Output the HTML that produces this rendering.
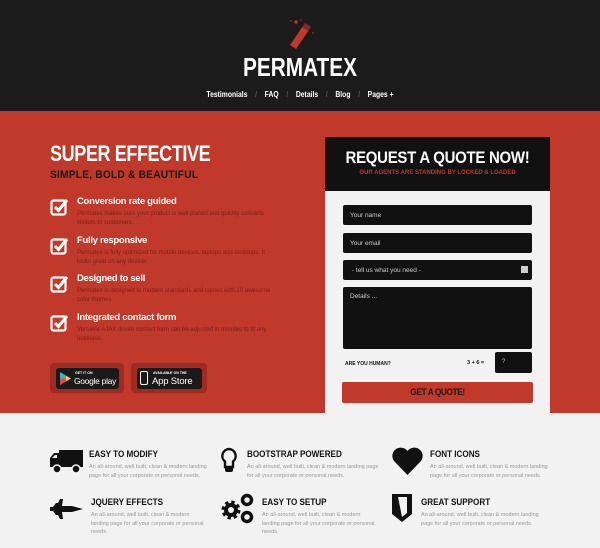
<!DOCTYPE html>
<html><head><meta charset="utf-8"><style>
*{margin:0;padding:0;box-sizing:border-box}
body{width:600px;height:548px;overflow:hidden;background:#f2f2f2;font-family:"Liberation Sans",sans-serif;position:relative}
.a{position:absolute}
.hd{left:0;top:0;width:600px;height:111px;background:#1b1b1b}
.red{left:0;top:111px;width:600px;height:302px;background:#c0392b}
.disp{font-weight:900;letter-spacing:-0.5px;white-space:nowrap}
.sl{transform:scaleX(0.86);transform-origin:left top}
.sc{transform:scaleX(0.82);transform-origin:center top}
.nav{top:90px;left:0;width:600px;text-align:center;color:#fff;font-size:8px;font-weight:bold;transform:scaleX(0.85);transform-origin:center top}
.nav span{margin:0 9px}.nav i{color:#555;font-style:normal}
.t{color:#fff;font-size:9.5px;font-weight:bold;left:77px;letter-spacing:-0.3px}
.d{color:#7d221a;font-size:6px;left:77px;width:200px;line-height:9px}
.cb{left:50px;width:19px;height:19px}
.inp{left:343px;width:189px;background:#111;border-radius:2px;color:#ccc;font-size:6.5px;padding:7px 0 0 7px}
.ft{font-size:9px;font-weight:900;color:#111;white-space:nowrap;transform:scaleX(0.9);transform-origin:left top}
.fd{font-size:5.5px;color:#999;line-height:8.5px;width:130px}
</style></head><body>
<div class="a hd"></div>
<svg class="a" style="left:283px;top:17px" width="34" height="34" viewBox="0 0 34 34">
<path d="M22 6 L28 10 L13 32 L7 28 Z" fill="#c0392b"/><path d="M22 6 L28 10 L25 14 L19 10Z" fill="#1b1b1b" opacity=".4"/>
<path d="M11 5h4M13 3v4" stroke="#c0392b" stroke-width="1.3"/><circle cx="8" cy="4" r=".8" fill="#c0392b"/><circle cx="30" cy="16" r=".8" fill="#c0392b"/><circle cx="18" cy="3" r=".7" fill="#c0392b"/>
</svg>
<div class="a disp" style="top:52px;left:0;width:600px;text-align:center;color:#fff;font-size:26px;letter-spacing:0;transform:scaleX(0.8);transform-origin:center top">PERMATEX</div>
<div class="a nav"><span>Testimonials</span><i>/</i><span>FAQ</span><i>/</i><span>Details</span><i>/</i><span>Blog</span><i>/</i><span>Pages +</span></div>
<div class="a red"></div>
<div class="a disp sl" style="left:50px;top:141px;color:#fff;font-size:22px;transform:scaleX(0.82)">SUPER EFFECTIVE</div>
<div class="a disp sl" style="left:50px;top:169px;color:#1a1a1a;font-size:11px;letter-spacing:0.2px;transform:scaleX(0.93)">SIMPLE, BOLD &amp; BEAUTIFUL</div>

<svg class="a cb" style="top:197px" viewBox="0 0 19 19"><rect x="1.5" y="3.5" width="14" height="14" rx="2" fill="none" stroke="#fff" stroke-width="2.2"/><path d="M5 10l3.5 3.5L17 3" fill="none" stroke="#fff" stroke-width="3"/></svg>
<div class="a t" style="top:196px">Conversion rate guided</div>
<div class="a d" style="top:210px">Permatex makes sure your product is well placed and quickly converts visitors to customers.</div>
<svg class="a cb" style="top:236px" viewBox="0 0 19 19"><rect x="1.5" y="3.5" width="14" height="14" rx="2" fill="none" stroke="#fff" stroke-width="2.2"/><path d="M5 10l3.5 3.5L17 3" fill="none" stroke="#fff" stroke-width="3"/></svg>
<div class="a t" style="top:235px">Fully responsive</div>
<div class="a d" style="top:249px">Permatex is fully optimized for mobile devices, laptops and desktops. It looks great on any device!</div>
<svg class="a cb" style="top:274px" viewBox="0 0 19 19"><rect x="1.5" y="3.5" width="14" height="14" rx="2" fill="none" stroke="#fff" stroke-width="2.2"/><path d="M5 10l3.5 3.5L17 3" fill="none" stroke="#fff" stroke-width="3"/></svg>
<div class="a t" style="top:273px">Designed to sell</div>
<div class="a d" style="top:287px">Permatex is designed to modern standards and comes with 10 awesome color themes</div>
<svg class="a cb" style="top:313px" viewBox="0 0 19 19"><rect x="1.5" y="3.5" width="14" height="14" rx="2" fill="none" stroke="#fff" stroke-width="2.2"/><path d="M5 10l3.5 3.5L17 3" fill="none" stroke="#fff" stroke-width="3"/></svg>
<div class="a t" style="top:312px">Integrated contact form</div>
<div class="a d" style="top:326px">Versatile AJAX driven contact form can be adjusted in minutes to fit any business.</div>

<div class="a" style="left:50px;top:363px;width:74px;height:30px;background:#9e2b21;border-radius:4px"></div>
<div class="a" style="left:56px;top:368px;width:63px;height:21px;background:#1a1a1a;border-radius:3px;color:#fff;white-space:nowrap">
<svg class="a" style="left:4px;top:4px" width="11" height="13" viewBox="0 0 11 13"><path d="M0 0L11 6.5L0 13Z" fill="#3bb"/><path d="M0 6.5L11 6.5L0 13Z" fill="#e44"/><path d="M6 4L11 6.5L6 9Z" fill="#fc3"/></svg>
<div class="a" style="left:19px;top:3px;font-size:3.5px;font-weight:bold">GET IT ON</div>
<div class="a" style="left:18px;top:8px;font-size:8.5px;letter-spacing:-0.3px">Google play</div></div>
<div class="a" style="left:131px;top:363px;width:76px;height:30px;background:#9e2b21;border-radius:4px"></div>
<div class="a" style="left:137px;top:368px;width:65px;height:21px;background:#1a1a1a;border-radius:3px;color:#fff;white-space:nowrap">
<div class="a" style="left:3px;top:3px;width:8px;height:14px;border:1.5px solid #fff;border-radius:2px"></div>
<div class="a" style="left:16px;top:3px;font-size:3.5px;font-weight:bold">AVAILABLE ON THE</div>
<div class="a" style="left:15px;top:8px;font-size:9.5px;letter-spacing:-0.2px">App Store</div></div>

<div class="a" style="left:325px;top:137px;width:225px;height:54px;background:#111"></div>
<div class="a" style="left:325px;top:191px;width:225px;height:222px;background:#f2f2f2"></div>
<div class="a disp" style="left:325px;top:148px;width:225px;text-align:center;color:#fff;font-size:17px;letter-spacing:-0.3px;transform:scaleX(0.88);transform-origin:center top">REQUEST A QUOTE NOW!</div>
<div class="a" style="left:325px;top:170px;width:225px;text-align:center;color:#c0392b;font-size:6px;font-weight:bold">OUR AGENTS ARE STANDING BY LOCKED &amp; LOADED</div>
<div class="a inp" style="top:205px;height:20px">Your name</div>
<div class="a inp" style="top:233px;height:20px">Your email</div>
<div class="a inp" style="top:260px;height:20px">&nbsp;- tell us what you need -<div class="a" style="right:4px;top:6px;width:7px;height:7px;background:#ccc"></div></div>
<div class="a inp" style="top:287px;height:62px;padding-top:6px">Details ...</div>
<div class="a" style="left:345px;top:361px;font-size:5px;font-weight:bold;color:#111">ARE YOU HUMAN?</div>
<div class="a" style="left:467px;top:360px;font-size:5.5px;font-weight:bold;color:#111">3 + 6 =</div>
<div class="a" style="left:495px;top:352px;width:37px;height:21px;background:#111;border-radius:2px;color:#ccc;font-size:6px;padding:7px 0 0 7px">?</div>
<div class="a" style="left:342px;top:382px;width:191px;height:21px;background:#c0392b;border-radius:2px"></div>
<div class="a disp" style="left:342px;top:382px;width:191px;text-align:center;font-size:9.5px;line-height:21px;color:#1a1a1a;transform:scaleX(0.88);transform-origin:center top">GET A QUOTE!</div>

<svg class="a" style="left:50px;top:450px" width="33" height="24" viewBox="0 0 33 24"><rect x="9" y="0" width="24" height="17" fill="#111"/><path d="M0 8L4 3H9V17H0Z" fill="#111"/><circle cx="7" cy="19" r="4" fill="#111" stroke="#f2f2f2" stroke-width="1.5"/><circle cx="26" cy="19" r="4" fill="#111" stroke="#f2f2f2" stroke-width="1.5"/><path d="M2 8L5 5H7V8Z" fill="#f2f2f2"/></svg>
<div class="a ft" style="left:89px;top:449px">EASY TO MODIFY</div>
<div class="a fd" style="left:89px;top:463px">An all-around, well built, clean &amp; modern landing page for all your corporate or personal needs.</div>
<svg class="a" style="left:220px;top:447px" width="18" height="28" viewBox="0 0 18 28"><path d="M9 2a7 7 0 0 0-4 12.5V20h8v-5.5A7 7 0 0 0 9 2z" fill="none" stroke="#111" stroke-width="2.4"/><rect x="5" y="19" width="8" height="6" rx="2" fill="#111"/></svg>
<div class="a ft" style="left:247px;top:449px">BOOTSTRAP POWERED</div>
<div class="a fd" style="left:247px;top:463px;width:135px">An all-around, well built, clean &amp; modern landing page for all your corporate or personal needs.</div>
<svg class="a" style="left:392px;top:447px" width="31" height="28" viewBox="0 0 31 28"><path d="M15.5 28L2 14A7.5 7.5 0 0 1 15.5 4A7.5 7.5 0 0 1 29 14Z" fill="#111"/></svg>
<div class="a ft" style="left:430px;top:449px">FONT ICONS</div>
<div class="a fd" style="left:430px;top:463px">An all-around, well built, clean &amp; modern landing page for all your corporate or personal needs.</div>

<svg class="a" style="left:50px;top:498px" width="33" height="22" viewBox="0 0 33 22"><path d="M0 9H3L6 5H8L10 1H13L12 8H22L33 11L22 14H12L13 21H10L8 17H6L3 13H0Z" fill="#111"/></svg>
<div class="a ft" style="left:91px;top:497px">JQUERY EFFECTS</div>
<div class="a fd" style="left:91px;top:511px;width:115px">An all-around, well built, clean &amp; modern landing page for all your corporate or personal needs.</div>
<svg class="a" style="left:221px;top:492px" width="33" height="32" viewBox="0 0 33 32"><circle cx="10" cy="18" r="7" fill="none" stroke="#111" stroke-width="5" stroke-dasharray="3 2.5"/><circle cx="10" cy="18" r="5" fill="none" stroke="#111" stroke-width="4"/><circle cx="26" cy="8" r="4.5" fill="none" stroke="#111" stroke-width="3.5"/><circle cx="26" cy="25" r="4.5" fill="none" stroke="#111" stroke-width="3.5"/></svg>
<div class="a ft" style="left:262px;top:497px">EASY TO SETUP</div>
<div class="a fd" style="left:262px;top:511px;width:115px">An all-around, well built, clean &amp; modern landing page for all your corporate or personal needs.</div>
<svg class="a" style="left:392px;top:494px" width="20" height="28" viewBox="0 0 20 28"><path d="M0 0H20V20L10 28L0 20Z" fill="#111"/><path d="M6 3H15V19L10 23Z" fill="#f2f2f2"/></svg>
<div class="a ft" style="left:421px;top:497px">GREAT SUPPORT</div>
<div class="a fd" style="left:421px;top:511px">An all-around, well built, clean &amp; modern landing page for all your corporate or personal needs.</div>
</body></html>
